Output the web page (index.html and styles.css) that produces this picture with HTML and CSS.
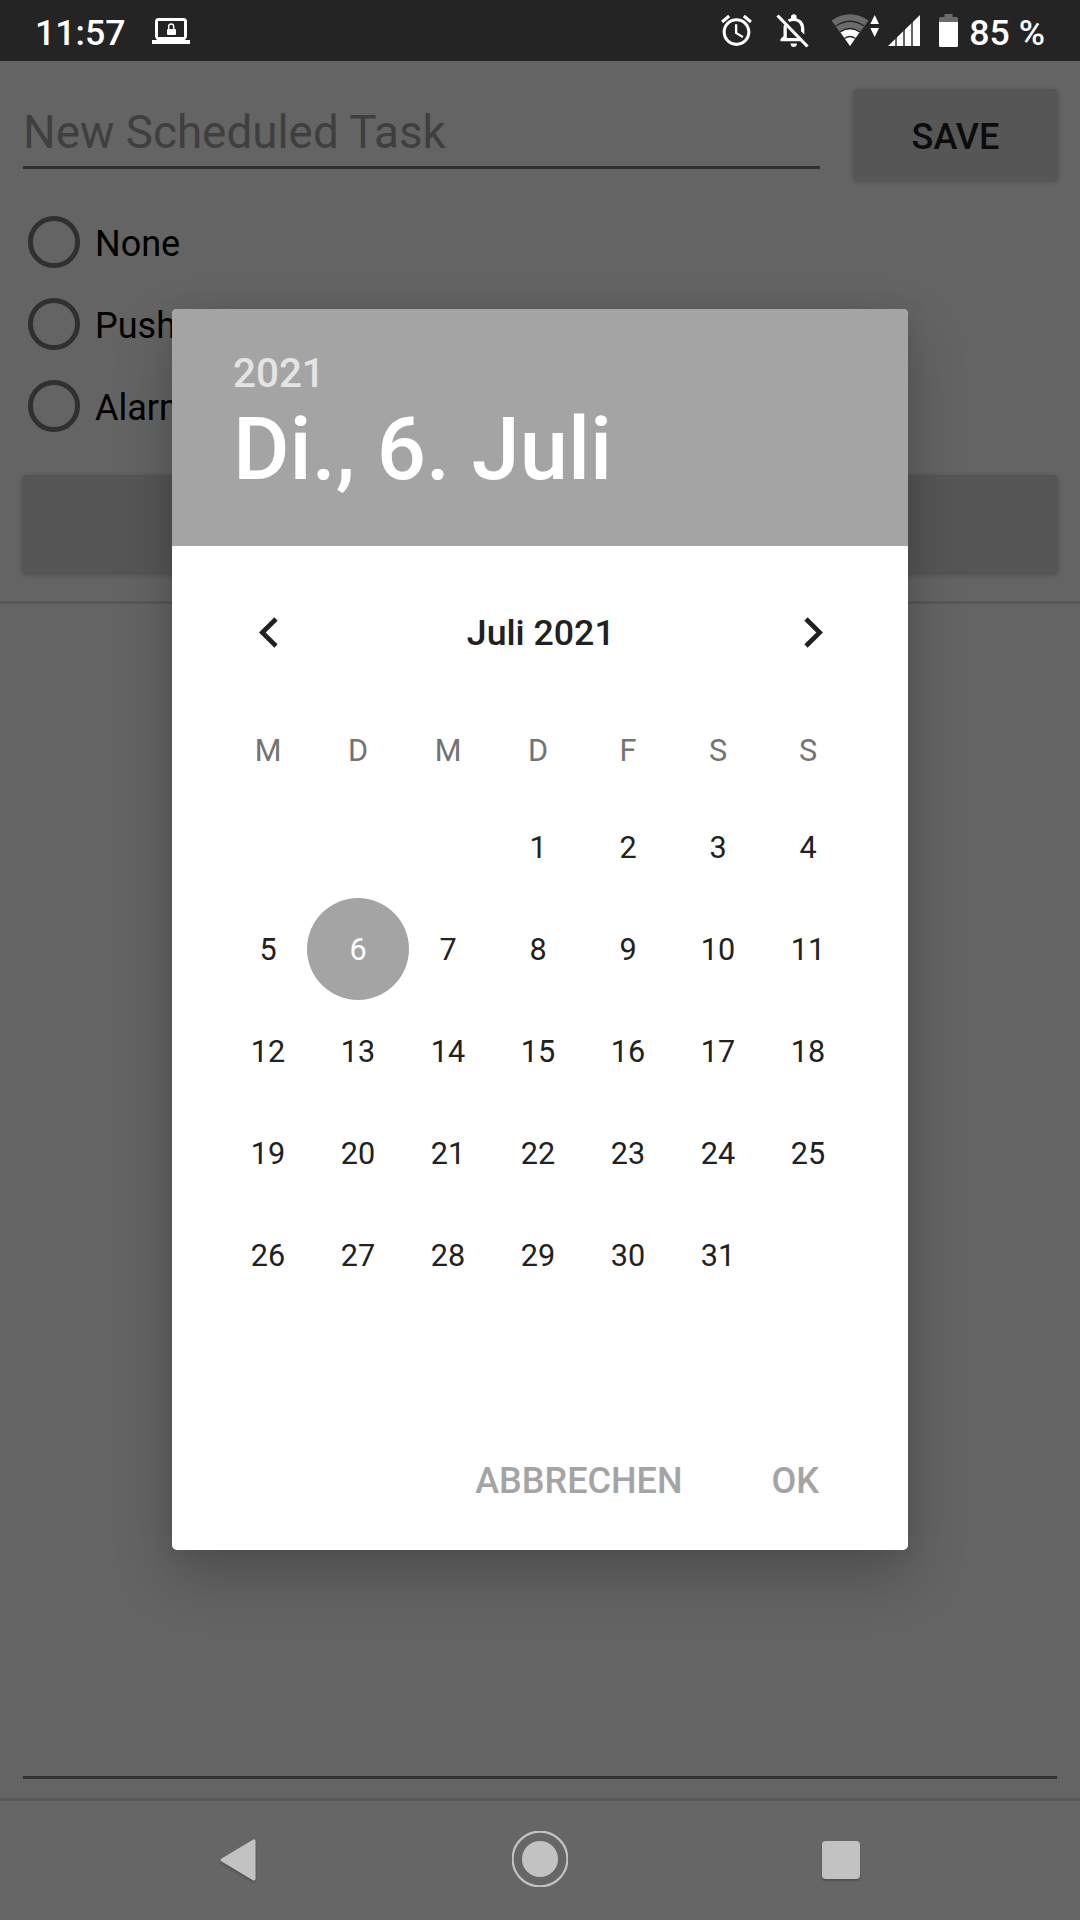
FILE: index.html
```html
<!DOCTYPE html>
<html lang="de">
<head>
<meta charset="utf-8">
<title>New Scheduled Task</title>
<link rel="stylesheet" href="styles.css">
</head>
<body>
<div class="screen">
  <header class="status">
    <span class="clock">11:57</span>
    <svg class="laptop" width="38" height="26" viewBox="0 0 38 26"><path fill="#fff" fill-rule="evenodd" d="M6.500 0H31.500Q35 0 35 3.500V18Q35 20.500 33 22H38V26H0V22H5Q3 20.500 3 18V3.500Q3 0 6.500 0ZM6 3V19H32V3Z"/><rect x="15" y="11" width="9" height="6" rx="1" fill="#fff"/><path d="M16.700 11V8.500a2.500 2.500 0 0 1 5 0V11" fill="none" stroke="#fff" stroke-width="1.400"/></svg>
    <div class="indicators">
      <svg class="alarm" width="37" height="37" viewBox="0 0 24 24" fill="#fff"><path d="M22 5.720l-4.600-3.860-1.290 1.530 4.600 3.860L22 5.720zM7.880 3.390L6.600 1.860 2 5.710l1.290 1.530 4.590-3.850zM12.500 8H11v6l4.750 2.850.75-1.230-4-2.370V8zM12 4c-4.970 0-9 4.030-9 9s4.020 9 9 9c4.970 0 9-4.030 9-9s-4.030-9-9-9zm0 16c-3.870 0-7-3.130-7-7s3.130-7 7-7 7 3.130 7 7-3.130 7-7 7z"/></svg>
      <svg class="bell" width="33" height="34" viewBox="0 0 33 34"><path fill="#fff" d="M15 3a2.800 2.800 0 0 1 5.600 0V4.500C25.500 5.700 28.300 9.500 28.300 14.500V20.500L25 17.200V14.500C25 10 22 7 17.800 7Q15.500 7 13.600 8L11.500 5.800Q13 4.800 15 4.300ZM8 10.500L10.800 13.300V24H21.500L25 27.300H4.500V25L7.500 22V14Q7.500 12 8 10.500ZM14.500 29.500H21Q20.600 33 17.700 33T14.500 29.500Z"/><path d="M1.500 1.500L31.500 32.500" stroke="#fff" stroke-width="3.200"/></svg>
      <svg class="wifi" width="49" height="33" viewBox="0 0 49 33"><path fill="#6b6b6b" d="M.5 6.500Q19 -6 37.500 6.500L19 32Z"/><path fill="#fff" d="M9.500 18.200Q19 12.500 28.500 18.200L19 32Z"/><path d="M5 12Q19 2.500 33 12M9 18Q19 11 29 18M13.500 24.500Q19 20.500 24.500 24.500" fill="none" stroke="#242424" stroke-width="1.300"/><path fill="#fff" d="M43.700 1L48 10H39.300ZM43.700 23L48 14H39.300Z"/></svg>
      <svg class="signal" width="32" height="31" viewBox="0 0 32 31"><path fill="#fff" d="M0 31L32 0V31Z"/><path d="M8 20V31M16 12V31M24 5V31" stroke="#242424" stroke-width="1.400"/></svg>
      <svg class="battery" width="19" height="33" viewBox="0 0 19 33"><path fill="#6b6b6b" d="M5.500 0H13.500V3H17.500Q19 3 19 5V9H0V5Q0 3 1.500 3H5.500Z"/><path fill="#fff" d="M0 8H19V31.500Q19 33 17.500 33H1.500Q0 33 0 31.500Z"/></svg>
      <span>85 %</span>
    </div>
  </header>

  <main class="form">
    <div class="task-row">
      <div class="task-input">New Scheduled Task</div>
      <div class="button save">SAVE</div>
    </div>
    <div class="options">
      <div class="option"><i class="radio"></i><span>None</span></div>
      <div class="option"><i class="radio"></i><span>Push</span></div>
      <div class="option"><i class="radio"></i><span>Alarm</span></div>
    </div>
    <div class="button wide"></div>
    <div class="divider"></div>
    <div class="details"></div>
    <div class="divider"></div>
  </main>

  <nav class="navbar">
    <svg class="nav-back" width="38" height="44" viewBox="0 0 38 44"><path d="M33.800 2.200V39.800L2.500 21Z" fill="#c2c2c2" stroke="#c2c2c2" stroke-width="3.500" stroke-linejoin="round"/></svg>
    <svg class="nav-home" width="56" height="56" viewBox="0 0 56 56"><circle cx="28" cy="28" r="27.400" fill="none" stroke="#c2c2c2" stroke-width="2.200"/><circle cx="28" cy="28" r="18" fill="#c2c2c2"/></svg>
    <i class="nav-recent"></i>
  </nav>

  <section class="dialog">
    <div class="dialog-head">
      <div class="year">2021</div>
      <div class="date">Di., 6. Juli</div>
    </div>
    <div class="month">
      <svg width="19" height="31" viewBox="0 0 19 31"><path d="M17 2L3.300 15.500L17 29" fill="none" stroke="#212121" stroke-width="4.600"/></svg>
      <span>Juli 2021</span>
      <svg width="19" height="31" viewBox="0 0 19 31"><path d="M2 2L15.700 15.500L2 29" fill="none" stroke="#212121" stroke-width="4.600"/></svg>
    </div>
    <div class="week labels"><span>M</span><span>D</span><span>M</span><span>D</span><span>F</span><span>S</span><span>S</span></div>
    <div class="week"><span></span><span></span><span></span><span>1</span><span>2</span><span>3</span><span>4</span></div>
    <div class="week"><span>5</span><span class="selected">6</span><span>7</span><span>8</span><span>9</span><span>10</span><span>11</span></div>
    <div class="week"><span>12</span><span>13</span><span>14</span><span>15</span><span>16</span><span>17</span><span>18</span></div>
    <div class="week"><span>19</span><span>20</span><span>21</span><span>22</span><span>23</span><span>24</span><span>25</span></div>
    <div class="week"><span>26</span><span>27</span><span>28</span><span>29</span><span>30</span><span>31</span><span></span></div>
    <div class="actions"><span>ABBRECHEN</span><span>OK</span></div>
  </section>
</div>
</body>
</html>
```

FILE: styles.css
```css
* { box-sizing: border-box; }
body { margin: 0; font-family: Roboto, sans-serif; font-size: 35.7px; color: #000; }
svg { display: block; flex: none; }

.screen {
  position: relative;
  display: flex;
  flex-direction: column;
  width: 1080px;
  height: 1920px;
  background: #646464;
  overflow: hidden;
}

/* Status bar */
.status {
  display: flex;
  align-items: flex-start;
  height: 61px;
  padding: 0 35px 0 35px;
  background: #242424;
  color: #fff;
  font-weight: 500;
  line-height: 66px;
}
.clock { width: 117px; }
.laptop { margin-top: 18px; }
.indicators { display: flex; margin-left: auto; }
.alarm { margin: 12px 21px 0 0; }
.bell { margin: 14px 22px 0 0; }
.wifi { margin: 14px 8px 0 0; }
.signal { margin: 15px 19px 0 0; }
.battery { margin: 14px 11px 0 0; }

/* Task form */
.form { flex: 1; display: flex; flex-direction: column; }
.task-row { display: flex; justify-content: space-between; padding: 28px 22px 0 23px; }
.task-input {
  width: 797px;
  height: 80px;
  border-bottom: 3px solid #303030;
  color: #3f3f3f;
  font-size: 45.8px;
  line-height: 87px;
}
.button {
  background: #565656;
  border-radius: 5px;
  box-shadow: 0 1px 5px rgba(0, 0, 0, .22);
}
.save {
  width: 205px;
  height: 92px;
  padding-top: 2px;
  color: #0c0c0c;
  font-size: 36px;
  font-weight: 500;
  line-height: 92px;
  text-align: center;
}
.options { padding: 20px 28px 0; }
.option { display: flex; align-items: center; gap: 15.5px; height: 82px; font-size: 36px; }
.option span { padding-top: 3px; }
.radio { width: 51.5px; height: 51.5px; border: 5.5px solid #303030; border-radius: 50%; }
.wide { height: 99px; margin: 28px 22px 27px; }
.divider { height: 3px; background: #585858; }
.details { flex: 1; margin: 0 23px 19px; border-bottom: 3px solid #323232; }

/* Navigation bar */
.navbar { display: flex; height: 119px; padding: 30px 220px 0; background: #666; }
.nav-back { margin: 8px 254px 0 0; filter: drop-shadow(0 2px 1px rgba(0, 0, 0, .2)); }
.nav-home { margin-right: 253.5px; }
.nav-recent {
  width: 38px;
  height: 38px;
  margin-top: 9.5px;
  border-radius: 4px;
  background: #c2c2c2;
  box-shadow: 0 2px 2px rgba(0, 0, 0, .22);
}

/* Date picker */
.dialog {
  position: absolute;
  left: 172px;
  top: 309px;
  display: flex;
  flex-direction: column;
  width: 736px;
  height: 1241px;
  border-radius: 5px;
  background: #fff;
  color: #212121;
  box-shadow: 0 26px 58px rgba(0, 0, 0, .22), 0 0 24px rgba(0, 0, 0, .07);
}
.dialog-head {
  height: 237px;
  padding: 41px 61px 0;
  border-radius: 5px 5px 0 0;
  background: #a4a4a4;
  color: #fff;
  font-weight: 500;
}
.year { color: #e4e4e4; font-size: 40.4px; line-height: 48px; }
.date { font-size: 86.7px; line-height: 104px; }
.month {
  display: flex;
  align-items: center;
  justify-content: space-between;
  height: 172px;
  padding: 0 85px 0 86.5px;
  font-weight: 500;
}
.month span { padding-top: 2px; }
.week {
  display: grid;
  grid-template-columns: repeat(7, 90px);
  grid-template-rows: 102px;
  height: 102px;
  padding-left: 51px;
  font-size: 30.6px;
  line-height: 103px;
  text-align: center;
}
.labels { height: 78px; line-height: 66px; color: #737373; }
.selected { width: 102px; margin-left: -6px; border-radius: 50%; background: #a4a4a4; color: #fff; }
.actions {
  display: flex;
  justify-content: flex-end;
  gap: 89px;
  margin-top: auto;
  padding: 0 89px 48px 0;
  color: #a4a4a4;
  font-size: 36px;
  font-weight: 500;
}
```
